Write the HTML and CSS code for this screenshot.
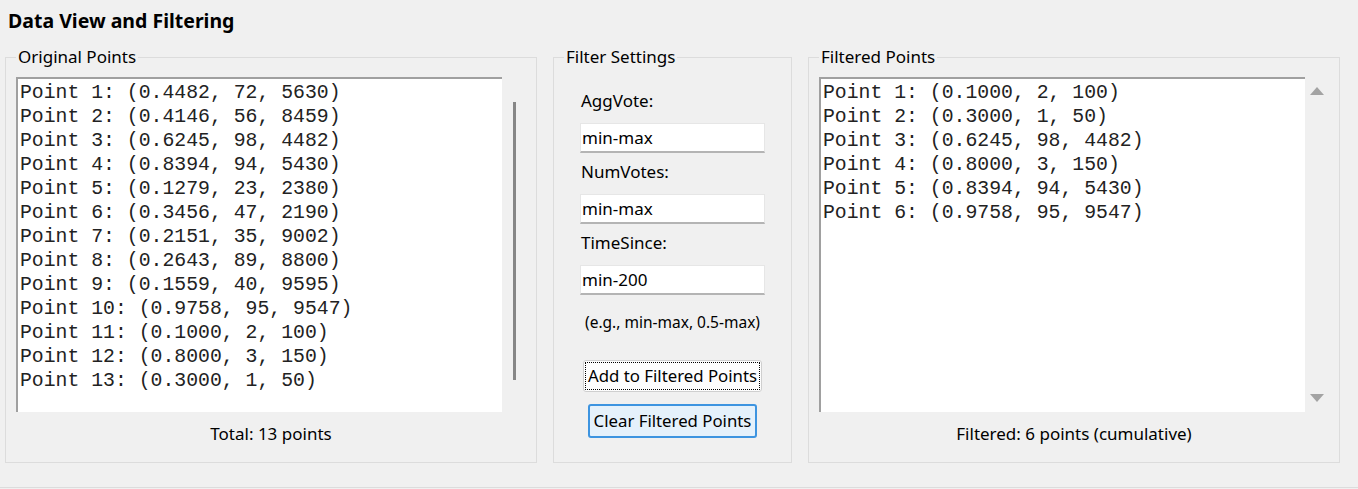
FILE: index.html
```html
<!DOCTYPE html>
<html lang="en">
<head>
    <meta charset="utf-8">
    <title>Data View and Filtering</title>
    <link rel="stylesheet" href="styles.css">
</head>
<body>
    <main class="view">
        <h1 class="view-title">Data View and Filtering</h1>
        <div class="panels">
            <fieldset class="group group-wide">
                <legend>Original Points</legend>
                <div class="list-row">
                    <div class="list-box">
                        <div>Point 1: (0.4482, 72, 5630)</div>
                        <div>Point 2: (0.4146, 56, 8459)</div>
                        <div>Point 3: (0.6245, 98, 4482)</div>
                        <div>Point 4: (0.8394, 94, 5430)</div>
                        <div>Point 5: (0.1279, 23, 2380)</div>
                        <div>Point 6: (0.3456, 47, 2190)</div>
                        <div>Point 7: (0.2151, 35, 9002)</div>
                        <div>Point 8: (0.2643, 89, 8800)</div>
                        <div>Point 9: (0.1559, 40, 9595)</div>
                        <div>Point 10: (0.9758, 95, 9547)</div>
                        <div>Point 11: (0.1000, 2, 100)</div>
                        <div>Point 12: (0.8000, 3, 150)</div>
                        <div>Point 13: (0.3000, 1, 50)</div>
                    </div>
                    <div class="scrollbar">
                        <span class="thumb"></span>
                    </div>
                </div>
                <p class="count">Total: 13 points</p>
            </fieldset>

            <fieldset class="group group-narrow">
                <legend>Filter Settings</legend>
                <div class="fields">
                    <label for="agg">AggVote:</label>
                    <input id="agg" type="text" value="min-max">
                    <label for="num">NumVotes:</label>
                    <input id="num" type="text" value="min-max">
                    <label for="time">TimeSince:</label>
                    <input id="time" type="text" value="min-200">
                </div>
                <p class="hint">(e.g., min-max, 0.5-max)</p>
                <button class="btn btn-focus">Add to Filtered Points</button>
                <button class="btn btn-default">Clear Filtered Points</button>
            </fieldset>

            <fieldset class="group group-wide">
                <legend>Filtered Points</legend>
                <div class="list-row">
                    <div class="list-box">
                        <div>Point 1: (0.1000, 2, 100)</div>
                        <div>Point 2: (0.3000, 1, 50)</div>
                        <div>Point 3: (0.6245, 98, 4482)</div>
                        <div>Point 4: (0.8000, 3, 150)</div>
                        <div>Point 5: (0.8394, 94, 5430)</div>
                        <div>Point 6: (0.9758, 95, 9547)</div>
                    </div>
                    <div class="scrollbar scrollbar-arrows">
                        <span class="arrow arrow-up"></span>
                        <span class="arrow arrow-down"></span>
                    </div>
                </div>
                <p class="count">Filtered: 6 points (cumulative)</p>
            </fieldset>
        </div>
    </main>
</body>
</html>
```

FILE: styles.css
```css
:root {
    box-sizing: border-box;
}
:root * {
    box-sizing: inherit;
}
body {
    background-color: #F0F0F0;
    color: #000;
    font-family: "Noto Sans", "Open Sans", sans-serif;
    font-size: 17px;
    line-height: 24px;
    margin: 0;
}
.view {
    border-bottom: 1px solid #DCDCDC;
    height: 488px;
    padding: 9px 0 0;
}
.view-title {
    font-size: 19.5px;
    font-weight: 700;
    line-height: 24px;
    margin: 0 0 14px 8px;
}
.panels {
    display: flex;
    gap: 16px;
    padding: 0 0 0 5px;
}
.group {
    border: 1px solid #DCDCDC;
    display: flex;
    flex-direction: column;
    margin: 0;
    min-width: 0;
    padding: 10px 10px 16px;
}
.group legend {
    line-height: 20px;
    padding: 0 2px;
}
.group-wide {
    width: 532px;
}
.group-narrow {
    align-items: center;
    width: 239px;
}
.list-row {
    display: flex;
}
.list-box {
    background-color: #FFF;
    border-left: 2px solid #A0A0A0;
    border-top: 2px solid #A0A0A0;
    color: #222;
    font-family: "Liberation Mono", "Courier New", monospace;
    font-size: 19.8px;
    height: 335px;
    line-height: 24px;
    padding: 2px 2px 0;
    white-space: nowrap;
    width: 487px;
}
.scrollbar {
    align-items: center;
    display: flex;
    flex-direction: column;
    width: 24px;
}
.thumb {
    background-color: #868686;
    height: 278px;
    margin: 25px 0 0;
    width: 3px;
}
.scrollbar-arrows {
    justify-content: space-between;
    padding: 10px 0;
}
.arrow {
    border-left: 7px solid transparent;
    border-right: 7px solid transparent;
    height: 0;
    width: 0;
}
.arrow-up {
    border-bottom: 8px solid #A3A3A3;
}
.arrow-down {
    border-top: 8px solid #A3A3A3;
}
.count {
    margin: 10px 0 0;
    text-align: center;
}
.fields {
    display: flex;
    flex-direction: column;
    margin: 12px 0 0;
    width: 185px;
}
.fields label {
    margin: 0 0 10px 1px;
}
.fields input {
    background-color: #FFF;
    border: 1px solid #E6E6E6;
    border-bottom: 2px solid #B4B4B4;
    color: #000;
    font: inherit;
    height: 30px;
    margin: 0 0 7px;
    padding: 0 1px;
}
.hint {
    font-size: 15.5px;
    line-height: 20px;
    margin: 10px 0 0;
    white-space: nowrap;
}
.btn {
    border-radius: 3px;
    color: #000;
    font: inherit;
    font-size: 16.8px;
    line-height: 24px;
    padding: 0;
    white-space: nowrap;
}
.btn-focus {
    background-color: #FDFDFD;
    border: 1px solid #CFCFCF;
    height: 32px;
    margin: 28px 0 0;
    outline: 1px dotted #000;
    outline-offset: -3px;
    width: 179px;
}
.btn-default {
    background-color: #E5F1FB;
    border: 2px solid #3D94E0;
    height: 34px;
    margin: 12px 0 0;
    width: 169px;
}
```
